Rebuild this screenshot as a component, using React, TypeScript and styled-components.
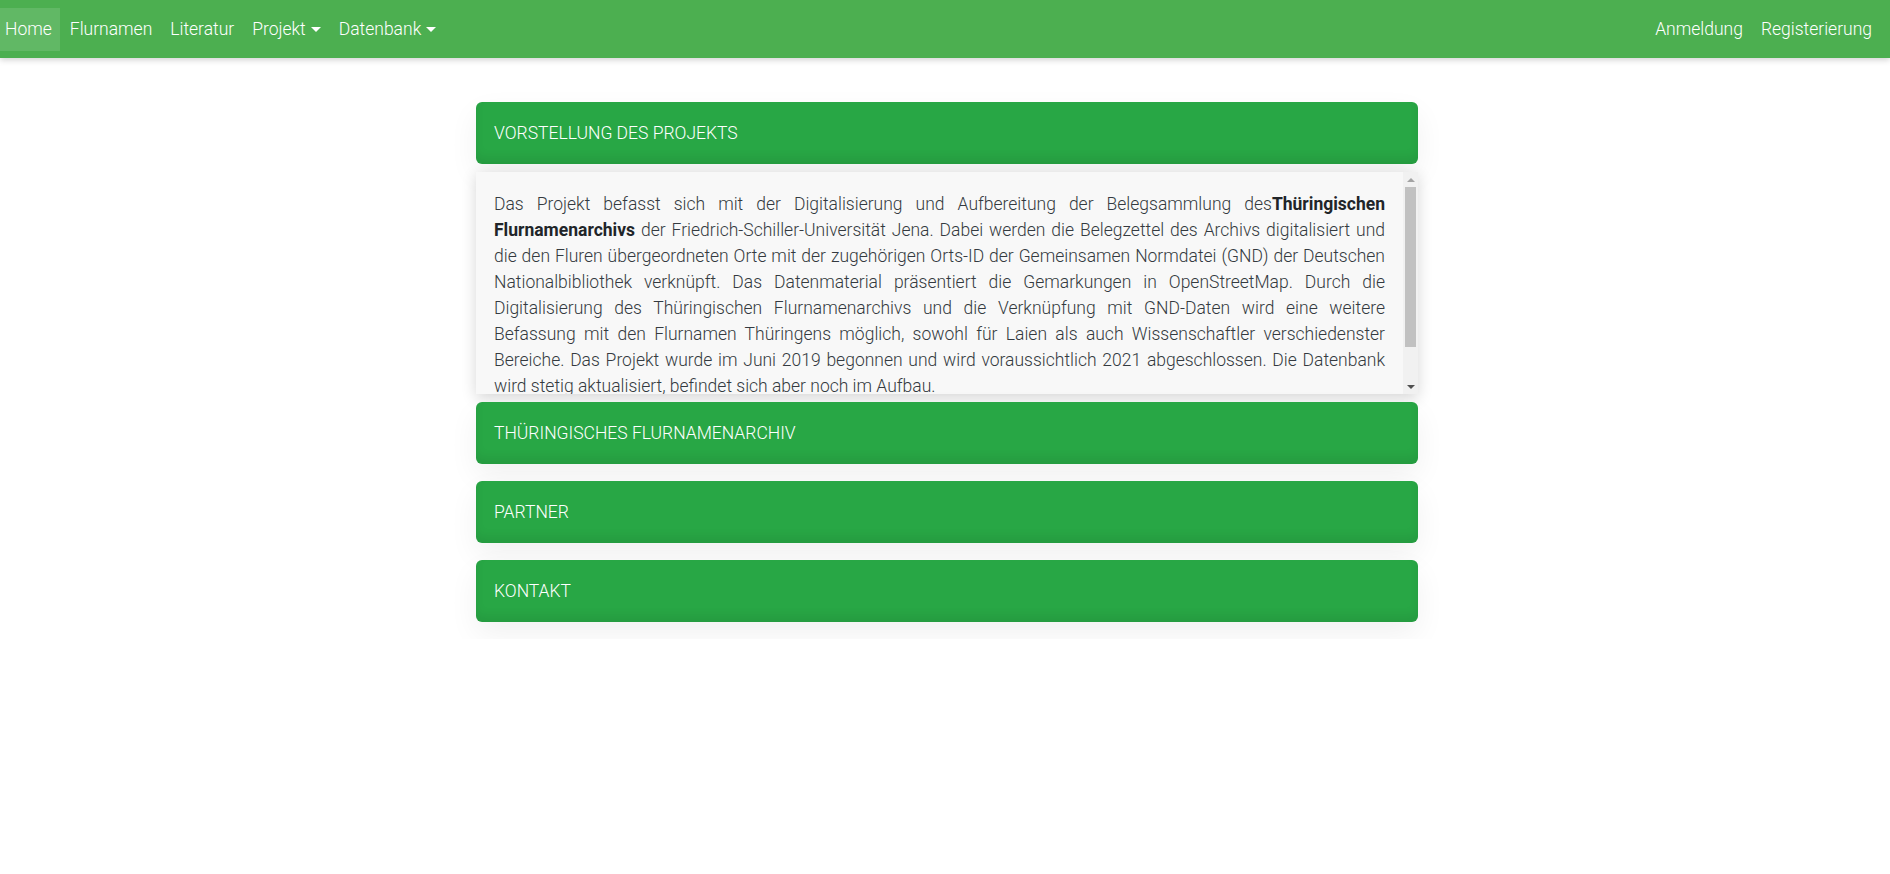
import styled, { createGlobalStyle } from "styled-components";

const GlobalStyle = createGlobalStyle`
  body {
    margin: 0;
    background: #fff;
    font-family: Roboto, "Liberation Sans", sans-serif;
    font-weight: 300;
  }
`;

const leftLinks = [
  { label: "Home", active: true },
  { label: "Flurnamen" },
  { label: "Literatur" },
  { label: "Projekt", dropdown: true },
  { label: "Datenbank", dropdown: true },
];

const sections = [
  "VORSTELLUNG DES PROJEKTS",
  "THÜRINGISCHES FLURNAMENARCHIV",
  "PARTNER",
  "KONTAKT",
];

const App = () => {
  return (
    <>
      <GlobalStyle />
      <Navbar>
        <NavGroup>
          {leftLinks.map((l) => (
            <NavLink key={l.label} $active={l.active}>
              {l.label}
              {l.dropdown && <Caret />}
            </NavLink>
          ))}
        </NavGroup>
        <NavGroup>
          <NavLink>Anmeldung</NavLink>
          <NavLink>Registerierung</NavLink>
        </NavGroup>
      </Navbar>
      <Accordion>
        {sections.map((title, i) => (
          <Item key={title} $open={i === 0}>
            <Header>{title}</Header>
            {i === 0 && (
              <Body>
                <Text>
                  Das Projekt befasst sich mit der Digitalisierung und
                  Aufbereitung der Belegsammlung des
                  <b>Thüringischen Flurnamenarchivs</b> der
                  Friedrich-Schiller-Universität Jena. Dabei werden die
                  Belegzettel des Archivs digitalisiert und die den Fluren
                  übergeordneten Orte mit der zugehörigen Orts-ID der
                  Gemeinsamen Normdatei (GND) der Deutschen Nationalbibliothek
                  verknüpft. Das Datenmaterial präsentiert die Gemarkungen in
                  OpenStreetMap. Durch die Digitalisierung des Thüringischen
                  Flurnamenarchivs und die Verknüpfung mit GND-Daten wird eine
                  weitere Befassung mit den Flurnamen Thüringens möglich,
                  sowohl für Laien als auch Wissenschaftler verschiedenster
                  Bereiche. Das Projekt wurde im Juni 2019 begonnen und wird
                  voraussichtlich 2021 abgeschlossen. Die Datenbank wird stetig
                  aktualisiert, befindet sich aber noch im Aufbau.
                </Text>
                <Scrollbar>
                  <ScrollArrow $dir="up" />
                  <Track>
                    <Thumb />
                  </Track>
                  <ScrollArrow $dir="down" />
                </Scrollbar>
              </Body>
            )}
          </Item>
        ))}
      </Accordion>
    </>
  );
};

const Navbar = styled.nav`
  height: 58px;
  background: #4caf50;
  display: flex;
  align-items: center;
  justify-content: space-between;
  padding-right: 10px;
  box-shadow: 0 2px 6px rgba(0, 0, 0, 0.18);
  position: relative;
  z-index: 2;
`;

const NavGroup = styled.div`
  display: flex;
  align-items: center;
  gap: 2px;
`;

const NavLink = styled.a<{ $active?: boolean }>`
  display: flex;
  align-items: center;
  height: 43px;
  padding: 0 8px 0 5px;
  color: #fff;
  font-size: 17.5px;
  font-weight: 300;
  cursor: pointer;
  background: ${(p) => (p.$active ? "rgba(255,255,255,0.12)" : "transparent")};
  & + & {
    padding-left: 8px;
  }
`;

const Caret = styled.span`
  display: inline-block;
  margin-left: 5px;
  border-top: 5px solid #fff;
  border-left: 5px solid transparent;
  border-right: 5px solid transparent;
`;

const Accordion = styled.main`
  width: 942px;
  margin: 44px 0 0 calc(50% - 469px);
  display: flex;
  flex-direction: column;
`;

const Item = styled.section<{ $open?: boolean }>`
  display: flex;
  flex-direction: column;
  gap: 8px;
  margin-bottom: ${(p) => (p.$open ? "8px" : "17px")};
`;

const Header = styled.div`
  height: 62px;
  display: flex;
  align-items: center;
  padding: 0 18px;
  border-radius: 6px;
  background: #28a745;
  color: #fff;
  font-size: 17.5px;
  font-weight: 300;
  box-shadow: inset 0 -7px 10px rgba(0, 0, 0, 0.07),
    0 12px 30px rgba(0, 0, 0, 0.06);
`;

const Body = styled.div`
  height: 222px;
  display: flex;
  background: #f8f8f8;
  box-shadow: 0 4px 14px rgba(0, 0, 0, 0.16);
`;

const Text = styled.p`
  flex: 1;
  margin: 0;
  overflow: hidden;
  padding: 19px 18px 0;
  color: #343a40;
  font-size: 17.5px;
  line-height: 26px;
  text-align: justify;
  b {
    font-weight: 700;
    color: #212529;
  }
`;

const Scrollbar = styled.div`
  width: 15px;
  display: flex;
  flex-direction: column;
  background: #f1f1f1;
`;

const ScrollArrow = styled.div<{ $dir: "up" | "down" }>`
  height: 15px;
  display: flex;
  align-items: center;
  justify-content: center;
  &::before {
    content: "";
    border-left: 4px solid transparent;
    border-right: 4px solid transparent;
    ${(p) =>
      p.$dir === "up"
        ? "border-bottom: 4px solid #a3a3a3;"
        : "border-top: 4px solid #505050;"}
  }
`;

const Track = styled.div`
  flex: 1;
  padding: 0 2px;
`;

const Thumb = styled.div`
  height: 160px;
  background: #c1c1c1;
`;

export default App;
